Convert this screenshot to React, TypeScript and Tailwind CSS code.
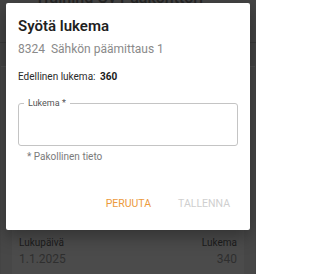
import React from "react";

export default function App() {
  const font = { fontFamily: "Roboto, 'Noto Sans', Arial, sans-serif" };
  return (
    <div
      className="relative w-[256px] h-[274px] overflow-hidden bg-[#444444]"
      style={font}
    >
      {/* background page (dimmed) */}
      <div className="flex flex-col h-full">
        <div className="h-[43px] border-b border-[#3a3a3a] flex items-start pl-[35px]">
          <div className="mt-[-12px] text-[16px] leading-[20px] text-[#262626] font-medium">
            Training Oy Pääkonttori
          </div>
        </div>
        <div className="mt-[23px] mx-[1px] flex-1 bg-[#474747] border-t border-[#4f4f4f] px-[11px]">
          <div className="h-full bg-[#4b4b4b] px-[7px] pt-[169px] flex justify-between">
            <div className="flex flex-col">
              <span className="text-[10px] leading-[14px] text-[#1c1c1c]">Lukupäivä</span>
              <span className="text-[12px] leading-[18px] text-[#2f2f2f]">1.1.2025</span>
            </div>
            <div className="flex flex-col items-end">
              <span className="text-[10px] leading-[14px] text-[#1c1c1c]">Lukema</span>
              <span className="text-[12px] leading-[18px] text-[#2f2f2f]">340</span>
            </div>
          </div>
        </div>
      </div>

      {/* dialog */}
      <div className="absolute left-[6px] top-[3px] w-[244px] h-[227px] bg-white rounded-[2px] shadow-[0_6px_18px_rgba(0,0,0,0.35)] flex flex-col px-[12px] pt-[13px]">
        <div className="text-[15px] leading-[20px] font-semibold text-[#1f1f1f]">
          Syötä lukema
        </div>
        <div className="mt-[5px] text-[12px] leading-[16px] text-[#8a8a8a] whitespace-pre">
          8324  Sähkön päämittaus 1
        </div>
        <div className="mt-[13px] text-[10px] leading-[14px] text-[#2a2a2a]">
          Edellinen lukema:{" "}
          <span className="font-bold text-[#1a1a1a] ml-[2px]">360</span>
        </div>
        <div className="relative mt-[19px] h-[43px] w-[220px] rounded-[3px] border border-[#c4c4c4]">
          <span className="absolute left-[5px] top-[-6px] px-[4px] bg-white text-[9px] leading-[11px] text-[#555555]">
            Lukema *
          </span>
        </div>
        <div className="mt-[4px] pl-[9px] text-[10px] leading-[13px] text-[#7a7a7a]">
          * Pakollinen tieto
        </div>
        <div className="mt-[33px] flex justify-end gap-[27px] pr-[8px]">
          <span className="text-[10.5px] leading-[16px] font-normal text-[#ec9a3c]">
            PERUUTA
          </span>
          <span className="text-[10.5px] leading-[16px] font-normal text-[#cfcfcf]">
            TALLENNA
          </span>
        </div>
      </div>
    </div>
  );
}
